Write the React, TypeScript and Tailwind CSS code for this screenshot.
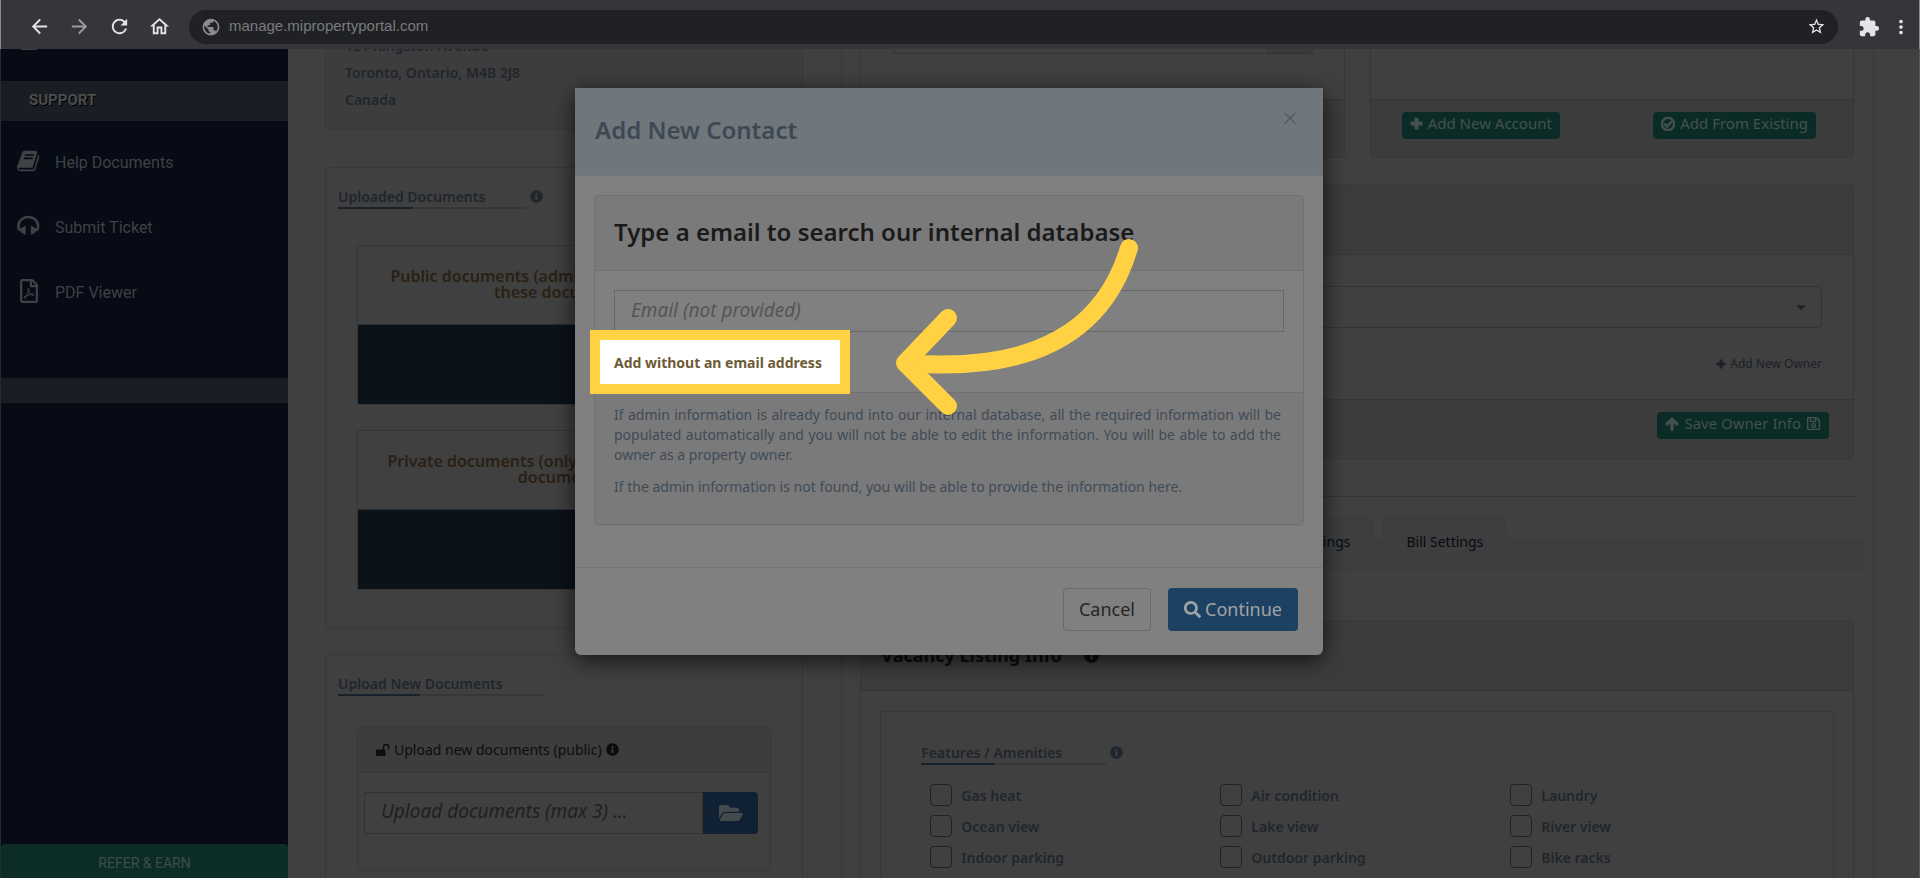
import React from "react";
import {
  FaArrowUp,
  FaCaretDown,
  FaFolderOpen,
  FaInfoCircle,
  FaRegCheckCircle,
  FaRegFilePdf,
  FaRegSave,
  FaSearch,
} from "react-icons/fa";
import {
  MdArrowBack,
  MdArrowForward,
  MdExtension,
  MdMoreVert,
  MdOutlineHome,
  MdPublic,
  MdRefresh,
  MdStarBorder,
} from "react-icons/md";

const BOOK =
  "M1639 478q40 57 18 129l-275 906q-19 64-76.5 107.5t-122.5 43.5h-923q-77 0-148.5-53.5t-99.5-131.5q-24-67-2-127 0-4 3-27t4-37q1-8-3-21.5t-3-19.5q2-11 8-21t16.5-23.5 16.5-23.5q23-38 45-91.5t30-91.5q3-10 .5-30t-.5-28q3-11 17-28t17-23q21-36 42-92t25-90q1-9-2.5-32t.5-28q4-13 22-30.5t22-22.5q19-26 42.5-84.5t27.5-96.5q1-8-3-25.5t-2-26.5q2-8 9-18t18-23 17-21q8-12 16.5-30.5t15-35 16-36 19.5-32 26.5-23.5 36-11.5 47.5 5.5l-1 3q38-9 51-9h761q74 0 114 56t18 130l-274 906q-36 119-71.5 153.5t-128.5 34.5h-869q-27 0-38 15-11 16-1 43 24 70 144 70h923q29 0 56-15.5t35-41.5l300-987q7-22 5-57 38 15 59 43zm-1064 2q-4 13 2 22.5t20 9.5h608q13 0 25.5-9.5t16.5-22.5l21-64q4-13-2-22.5t-20-9.5h-608q-13 0-25.5 9.5t-16.5 22.5zm-83 256q-4 13 2 22.5t20 9.5h608q13 0 25.5-9.5t16.5-22.5l21-64q4-13-2-22.5t-20-9.5h-608q-13 0-25.5 9.5t-16.5 22.5z";
const HEADPHONES =
  "M1674 886q0 166-60 314l-20 49-185 33q-22 83-90.5 136.5t-156.5 53.5v32q0 14-9 23t-23 9h-64q-14 0-23-9t-9-23v-576q0-14 9-23t23-9h64q14 0 23 9t9 23v32q71 0 130 35.5t93 95.5l68-12q29-95 29-193 0-148-88-279t-236.5-209-315.5-78-315.5 78-236.5 209-88 279q0 98 29 193l68 12q34-60 93-95.5t130-35.5v-32q0-14 9-23t23-9h64q14 0 23 9t9 23v576q0 14-9 23t-23 9h-64q-14 0-23-9t-9-23v-32q-88 0-156.5-53.5t-90.5-136.5l-185-33-20-49q-60-148-60-314 0-151 67-291t179-242.5 266-163.5 320-61 320 61 266 163.5 179 242.5 67 291z";

function Glyph({ d, className }: { d: string; className: string }) {
  return (
    <svg viewBox="0 0 1792 1792" className={className} fill="currentColor" aria-hidden="true">
      <path d={d} />
    </svg>
  );
}

function Plus({ className }: { className: string }) {
  return (
    <svg viewBox="0 0 14 14" className={className} fill="currentColor" aria-hidden="true">
      <path d="M5.300 0.800h3.400q.5 0 .5.5V4.800h3.700q.5 0 .5.5v3.400q0 .5-.5.5H9.200v3.700q0 .5-.5.5h-3.400q-.5 0-.5-.5V9.200H1.100Q.6 9.200.6 8.700v-3.400Q.6 4.800 1.100 4.800H4.800V1.300q0-.5.5-.5z" />
    </svg>
  );
}

function Unlock() {
  return (
    <svg viewBox="0 0 14 14" className="size-[14px]" aria-hidden="true">
      <rect x="0" y="6.500" width="9.500" height="6.500" rx="1" fill="currentColor" />
      <path d="M7.500 7V4.200a2.600 2.600 0 0 1 5.200 0V6" fill="none" stroke="currentColor" strokeWidth="1.500" strokeLinecap="round" />
    </svg>
  );
}

function BrowserBar() {
  return (
    <header className="flex h-[49px] shrink-0 items-center border-x border-[#8c8d8f] bg-[#35363a] pt-1 text-[#e3e4e6]">
      <nav className="flex items-center gap-[17px] pl-[27px]">
        <button aria-label="Back"><MdArrowBack className="size-[23px]" /></button>
        <button aria-label="Forward" className="text-[#9c9da0]"><MdArrowForward className="size-[23px]" /></button>
        <button aria-label="Reload"><MdRefresh className="size-[23px]" /></button>
        <button aria-label="Home"><MdOutlineHome className="size-[23px]" /></button>
      </nav>
      <div className="ml-[18px] flex h-[34px] flex-1 items-center rounded-full bg-[#202124] pr-3 pl-3">
        <MdPublic className="size-[20px] shrink-0 text-[#8b8c8f]" />
        <input
          aria-label="Address"
          defaultValue="manage.mipropertyportal.com"
          className="ml-2 min-w-0 flex-1 bg-transparent font-['Liberation_Sans',sans-serif] text-[15px] text-[#7a7b7e] outline-none"
        />
        <button aria-label="Bookmark"><MdStarBorder className="size-[19px]" /></button>
      </div>
      <div className="flex items-center gap-[10px] pr-[7px] pl-5">
        <button aria-label="Extensions"><MdExtension className="size-[22px]" /></button>
        <button aria-label="Menu"><MdMoreVert className="size-[22px]" /></button>
      </div>
    </header>
  );
}

function SideLink({ icon, label }: { icon: React.ReactNode; label: string }) {
  return (
    <a href="#" className="flex h-[65px] items-center pl-4 text-[16px]">
      <span className="mb-1 flex w-[38px]">{icon}</span>
      {label}
    </a>
  );
}

function Sidebar() {
  return (
    <aside className="flex w-72 shrink-0 flex-col overflow-hidden border-l border-[#252a34] bg-[#060b16] font-[Roboto,sans-serif] text-[#3f4144]">
      <div className="-mt-[42px] h-[74px] shrink-0">
        <SideLink icon={<FaRegFilePdf className="size-6" />} label="Templates" />
      </div>
      <h2 className="flex h-10 shrink-0 items-center bg-[#191e24] pb-0.5 pl-7 text-[15px] font-bold text-[#4d4d4d] [text-shadow:1px_1px_#000]">
        SUPPORT
      </h2>
      <nav className="h-[257px] shrink-0 pt-[9px]">
        <SideLink icon={<Glyph d={BOOK} className="size-6" />} label="Help Documents" />
        <SideLink icon={<Glyph d={HEADPHONES} className="size-6" />} label="Submit Ticket" />
        <SideLink icon={<FaRegFilePdf className="size-6" />} label="PDF Viewer" />
      </nav>
      <div className="h-[25px] shrink-0 bg-[#191e24]" />
      <button className="mt-auto h-[34px] rounded-t bg-[#0b2d26] pt-1 text-[14px] text-[#3d4c48]">REFER &amp; EARN</button>
    </aside>
  );
}

function SectionTitle({ children, wide, info }: { children: React.ReactNode; wide?: string; info?: boolean }) {
  return (
    <div className="flex items-center gap-1 text-[#20262d]">
      <div className={wide}>
        <h3 className="text-[14px] leading-[20px] font-semibold">{children}</h3>
        <div className="flex h-0.5 bg-[#363738]">
          <div className="w-2/5 bg-[#192129]" />
        </div>
      </div>
      {info && <FaInfoCircle className="mb-1 size-[13px]" />}
    </div>
  );
}

function DocTable({ lines }: { lines: [string, string] }) {
  return (
    <table className="w-full border border-[#363636] text-center">
      <thead>
        <tr>
          <th className="h-[79px] pb-0.5 text-[16px] leading-[16px] font-semibold whitespace-nowrap text-[#2a2014]">
            {lines[0]}
            <br />
            {lines[1]}
          </th>
        </tr>
      </thead>
      <tbody>
        <tr>
          <td className="h-20 border-t border-[#2a2d30] bg-[#0b1218]" />
        </tr>
      </tbody>
    </table>
  );
}

const card = "rounded border border-[#383838]";

function LeftColumn() {
  return (
    <div className="flex min-w-0 flex-col">
      <address className={`${card} -mt-[17px] h-[98px] rounded-t-none border-t-0 bg-[#3d3d3d] pl-[19px] text-[14px] leading-[27px] font-semibold text-[#20262d] not-italic`}>
        121 Kingston Avenue
        <br />
        Toronto, Ontario, M4B 2J8
        <br />
        Canada
      </address>
      <section className={`${card} mt-[37px] h-[462px] px-3 pt-[19px]`}>
        <SectionTitle wide="w-[188px]" info>Uploaded Documents</SectionTitle>
        <div className="mx-[19px] mt-9 flex flex-col gap-[25px]">
          <DocTable lines={["Public documents (admin and owner can see", "these documents)"]} />
          <DocTable lines={["Private documents (only admin can see these", "documents)"]} />
        </div>
      </section>
      <section className={`${card} mt-[25px] h-[300px] px-3 pt-[19px]`}>
        <SectionTitle wide="w-[206px]">Upload New Documents</SectionTitle>
        <div className={`${card} mx-[19px] mt-[30px] h-[145px]`}>
          <h4 className="flex h-[46px] items-center gap-1 border-b border-[#363636] bg-[#3d3d3d] pl-[18px] text-[14px] text-[#0d0d0d]">
            <Unlock />
            Upload new documents (public)
            <FaInfoCircle className="size-[13px]" />
          </h4>
          <div className="mt-[19px] mr-3 ml-1.5 flex h-[42px]">
            <input
              aria-label="Upload documents"
              placeholder="Upload documents (max 3) ..."
              className="min-w-0 flex-1 border border-[#333333] pb-1 pl-4 text-[19px] italic placeholder:text-[#202020]"
            />
            <button aria-label="Browse" className="flex w-[55px] items-center justify-center rounded-r bg-[#0f2133] text-[#454a4f]">
              <FaFolderOpen className="size-6" />
            </button>
          </div>
        </div>
      </section>
    </div>
  );
}

function GreenButton({ children }: { children: React.ReactNode }) {
  return (
    <button className="flex h-[27px] items-center gap-[5px] rounded bg-[#0b2c26] px-2 pb-1 text-[15px] whitespace-nowrap text-[#44514e]">
      {children}
    </button>
  );
}

const amenities = [
  "Gas heat", "Air condition", "Laundry",
  "Ocean view", "Lake view", "River view",
  "Indoor parking", "Outdoor parking", "Bike racks",
];

const heavy = "size-[14px] stroke-current stroke-[40px]";

function RightColumn() {
  return (
    <div className="flex min-w-0 flex-col border-x border-[#383838] pr-[19px] pl-[18px]">
      <div className="grid grid-cols-2 gap-[25px]">
        <div className={`${card} flex h-[109px] flex-col rounded-t-none border-t-0`}>
          <div className="flex h-[50px] px-[31px]">
            <div className="h-[5px] flex-1 rounded-bl border border-t-0 border-[#333333]" />
            <div className="h-[5px] w-[45px] rounded-br border border-t-0 border-l-0 border-[#333333] bg-[#3b3b3b]" />
          </div>
          <div className="flex-1 border-t border-[#363636] bg-[#3c3c3c]" />
        </div>
        <div className={`${card} flex h-[109px] flex-col rounded-t-none border-t-0`}>
          <div className="h-[50px]" />
          <div className="flex flex-1 items-start justify-between border-t border-[#363636] bg-[#3c3c3c] pt-3 pr-[37px] pl-[31px]">
            <GreenButton><Plus className="size-[13px]" />Add New Account</GreenButton>
            <GreenButton><FaRegCheckCircle className={heavy} />Add From Existing</GreenButton>
          </div>
        </div>
      </div>

      <section className={`${card} mt-[26px] h-[275px]`}>
        <div className="h-[70px] border-b border-[#363636] bg-[#3c3c3c]" />
        <div className="flex h-[144px] flex-col px-[31px] pt-[31px]">
          <div className="relative">
            <select aria-label="Owner" className="h-[42px] w-full appearance-none rounded border border-[#333333]">
              <option></option>
            </select>
            <FaCaretDown className="pointer-events-none absolute top-3.5 right-3.5 size-[14px] text-[#202326]" />
          </div>
          <a href="#" className="mt-[26px] flex items-center gap-1 self-end text-[12px] leading-[20px] text-[#1c2127]">
            <Plus className="size-[10px]" />
            Add New Owner
          </a>
        </div>
        <div className="flex h-[59px] items-start justify-end border-t border-[#363636] bg-[#3c3c3c] pt-3 pr-6">
          <GreenButton><FaArrowUp className={heavy} />Save Owner Info<FaRegSave className="size-[15px]" /></GreenButton>
        </div>
      </section>

      <hr className="mt-[37px] border-[#343434]" />

      <div className="mt-5 -mr-3 -ml-3 h-[54px] bg-linear-to-b from-transparent from-[23px] to-[#3c3e40] to-[23px] pl-3">
        <div className="flex w-[646px] items-start justify-end gap-2.5 text-[14px] text-[#0b0b0b]">
          {["Listing Info", "Features", "Payments", "Notice Settings", "Bill Settings"].map((t) => (
            <button key={t} className="h-12 shrink-0 rounded-t border border-b-0 border-[#3a3c3e] bg-[#3c3e40] px-[22px]">
              {t}
            </button>
          ))}
        </div>
      </div>

      <section className={`${card} mt-[49px] h-[300px]`}>
        <h2 className="flex h-[70px] items-center gap-[22px] border-b border-[#363636] bg-[#3c3c3c] pl-5 text-[18px] font-bold text-[#0d0d0d]">
          Vacancy Listing Info
          <FaInfoCircle className="size-[15px]" />
        </h2>
        <div className="mx-[19px] mt-5 h-[240px] border border-[#383838] pt-[31px] pl-10">
          <SectionTitle wide="w-[185px]" info>Features / Amenities</SectionTitle>
          <div className="mt-5 grid grid-cols-[290px_290px_1fr] gap-y-[9px] pl-[9px]">
            {amenities.map((a) => (
              <label key={a} className="flex h-[22px] items-center gap-[9px] pb-0.5 text-[14px] font-semibold text-[#20262d]">
                <input type="checkbox" className="size-[22px] appearance-none rounded border border-[#1d2329]" />
                {a}
              </label>
            ))}
          </div>
        </div>
      </section>
    </div>
  );
}

function Modal() {
  return (
    <div
      role="dialog"
      aria-labelledby="modal-title"
      className="absolute top-[88px] left-1/2 -ml-[385px] w-[748px] rounded-md bg-[#808080] shadow-[0_5px_22px_rgba(0,0,0,0.7)]"
    >
      <div className="flex h-[88px] items-start justify-between border-b border-[#757676] bg-[#6f777d] pr-[25px] pl-5">
        <h2 id="modal-title" className="pt-[26px] text-[24px] leading-[32px] font-semibold text-[#3d4853]">Add New Contact</h2>
        <button aria-label="Close" className="mt-3 text-[28px] leading-[34px] font-light text-[#565c60]">×</button>
      </div>
      <div className="px-[19px] pt-[19px]">
        <div className="h-[330px] overflow-hidden rounded border border-[#707070] shadow-[0_1px_1px_rgba(0,0,0,0.05)]">
          <h3 className="flex h-[75px] items-center border-b border-[#717171] bg-[#7a7a7a] pb-0.5 pl-[19px] text-[24px] font-semibold text-[#1a1a1a]">
            Type a email to search our internal database
          </h3>
          <div className="h-[121px] px-[19px] pt-[19px]">
            <input
              aria-label="Email"
              placeholder="Email (not provided)"
              className="h-[42px] w-full border border-[#686868] px-4 pb-0.5 text-[19px] italic placeholder:text-[#555555]"
            />
          </div>
          <div className="h-[133px] border-t border-[#717171] bg-[#7a7a7a] pt-3 pr-[22px] pl-[19px] text-justify text-[14px] leading-[20px] text-[#404b57]">
            <p>
              If admin information is already found into our internal database, all the required information will be
              populated automatically and you will not be able to edit the information. You will be able to add the
              owner as a property owner.
            </p>
            <p className="mt-3">If the admin information is not found, you will be able to provide the information here.</p>
          </div>
        </div>
      </div>
      <div className="mt-[42px] flex h-[88px] justify-end gap-[17px] border-t border-[#757575] pt-5 pr-[25px] text-[18px]">
        <button className="h-[43px] w-[88px] rounded border border-[#696969] text-[#262626]">Cancel</button>
        <button className="flex h-[43px] w-[130px] items-center justify-center gap-1 rounded bg-[#1d4162] text-[#a0a3a6]">
          <FaSearch className="size-[17px]" />
          Continue
        </button>
      </div>

      <a
        href="#"
        className="absolute top-[242px] left-[15px] flex h-16 w-[260px] items-center border-[10px] border-[#ffd143] bg-white pl-3.5 text-[14px] font-bold whitespace-nowrap text-[#6e5a35]"
      >
        Add without an email address
      </a>
      <svg
        viewBox="890 230 260 200"
        className="pointer-events-none absolute top-[142px] left-[315px] h-[200px] w-[260px]"
        fill="none"
        stroke="#ffd143"
        strokeWidth="18"
        strokeLinecap="round"
        strokeLinejoin="round"
        aria-hidden="true"
      >
        <path d="M1129 248C1112 305 1065 376 906 363" />
        <path d="M948 318L905 363L948 406" />
      </svg>
    </div>
  );
}

export default function App() {
  return (
    <div className="relative flex h-screen flex-col overflow-hidden bg-[#404040] font-['Noto_Sans',sans-serif]">
      <BrowserBar />
      <div className="flex min-h-0 flex-1">
        <Sidebar />
        <main className="grid min-w-0 flex-1 grid-cols-[478fr_1032fr] gap-x-[38px] overflow-hidden border-r border-[#5a5a5a] pr-[45px] pl-[37px]">
          <LeftColumn />
          <RightColumn />
        </main>
      </div>
      <Modal />
    </div>
  );
}
